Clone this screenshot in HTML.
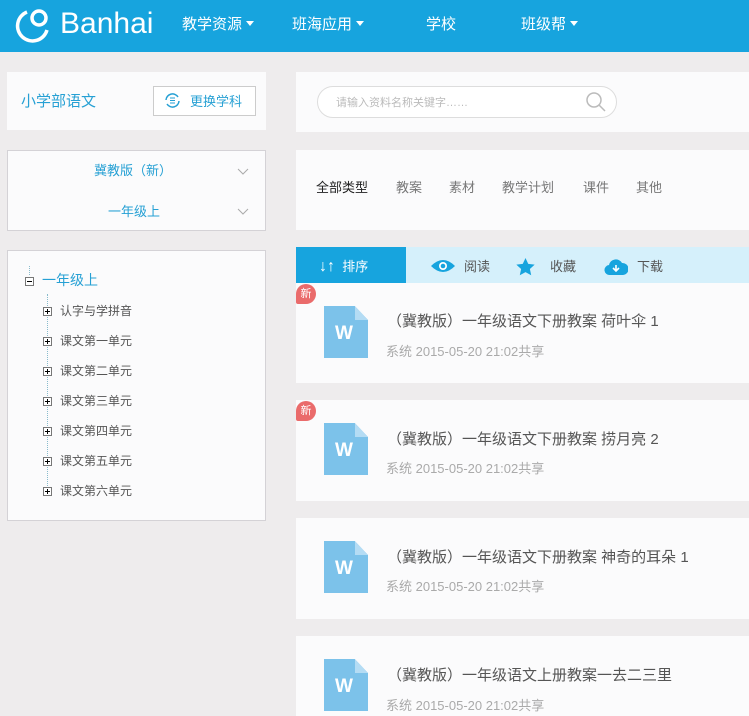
<!DOCTYPE html>
<html><head><meta charset="utf-8"><style>
*{margin:0;padding:0;box-sizing:border-box}
body{width:749px;height:716px;overflow:hidden;background:#eeeced;font-family:"Liberation Sans","Noto Sans CJK SC",sans-serif;position:relative}
.abs{position:absolute}
.hdr{left:0;top:0;width:749px;height:52px;background:#17a4de}
.nav{color:#fff;font-size:15px;top:13px}
.nav i{display:inline-block;border-left:4px solid transparent;border-right:4px solid transparent;border-top:5px solid #fff;margin-left:4px;vertical-align:3px}
.panel{background:#fbfbfc}
.bd{border:1px solid #d4d2d6}
.blue{color:#26a0d4}
.tree{font-size:12px;color:#555}
.pl{display:inline-block;width:9px;height:9px;border:1px solid #777;position:relative;vertical-align:-1px;margin-right:8px;background:#fff}
.pl:before{content:"";position:absolute;left:1px;top:3px;width:5px;height:1px;background:#000}
.pl.p:after{content:"";position:absolute;left:3px;top:1px;width:1px;height:5px;background:#000}
.card{left:296px;width:453px;background:#fbfbfc}
.doc{width:44px;height:52px;background:#7cc2ea;clip-path:polygon(0 0,70% 0,100% 27%,100% 100%,0 100%)}
.doc:after{content:"";position:absolute;right:0;top:0;width:13px;height:14px;background:#b4dcf4;clip-path:polygon(0 0,100% 100%,0 100%)}
.doc span{position:absolute;left:11px;top:17px;color:#fff;font-weight:bold;font-size:19px}
.t{font-size:15px;color:#555}
.s{font-size:13px;color:#aaa}
.new{width:20px;height:20px;border-radius:10px 10px 10px 2px;background:#ea6b6b;color:#fff;font-size:11px;text-align:center;line-height:20px}
</style></head><body>
<div class="abs hdr"></div>
<svg class="abs" style="left:14px;top:6px" width="38" height="38" viewBox="0 0 38 38"><path d="M13 6 A15 15 0 1 0 33 24" fill="none" stroke="#fff" stroke-width="3.5"/><circle cx="25" cy="12" r="7" fill="none" stroke="#fff" stroke-width="3.5"/></svg>
<div class="abs" style="left:60px;top:7px;color:#fff;font-size:30px;font-weight:300">Banhai</div>
<div class="abs nav" style="left:182px">教学资源<i></i></div>
<div class="abs nav" style="left:292px">班海应用<i></i></div>
<div class="abs nav" style="left:426px">学校</div>
<div class="abs nav" style="left:521px">班级帮<i></i></div>

<div class="abs panel" style="left:7px;top:72px;width:259px;height:58px"></div>
<div class="abs blue" style="left:21px;top:90px;font-size:15px">小学部语文</div>
<div class="abs bd" style="left:153px;top:86px;width:103px;height:30px;background:#fff;border-color:#ccc"></div>
<svg class="abs" style="left:163px;top:91px" width="19" height="19" viewBox="0 0 19 19"><path d="M3 9 A6.5 6.5 0 0 1 15 6 M16 10 A6.5 6.5 0 0 1 4 13" fill="none" stroke="#26a0d4" stroke-width="1.5"/><path d="M7 7h5M7 9.5h5M7 12h5" stroke="#26a0d4"/></svg>
<div class="abs blue" style="left:190px;top:91px;font-size:13px">更换学科</div>

<div class="abs panel bd" style="left:7px;top:150px;width:259px;height:81px"></div>
<div class="abs blue" style="left:94px;top:160px;font-size:13px">冀教版（新）</div>
<div class="abs blue" style="left:108px;top:201px;font-size:13px">一年级上</div>
<svg class="abs" style="left:237px;top:168px" width="12" height="50"><path d="M1 1l5 5 5-5M1 41l5 5 5-5" fill="none" stroke="#aaa"/></svg>

<div class="abs panel bd" style="left:7px;top:250px;width:259px;height:271px"></div>
<div class="abs" style="left:29px;top:266px;height:9px;border-left:1px dotted #8bc"></div>
<div class="abs" style="left:47px;top:294px;height:198px;border-left:1px dotted #8bc"></div>
<div class="abs" style="left:25px;top:270px;font-size:14px" ><span class="pl"></span><span class="blue">一年级上</span></div>
<div class="abs tree" style="left:43px;top:296px;line-height:30px">
<div><span class="pl p"></span>认字与学拼音</div><div><span class="pl p"></span>课文第一单元</div><div><span class="pl p"></span>课文第二单元</div><div><span class="pl p"></span>课文第三单元</div><div><span class="pl p"></span>课文第四单元</div><div><span class="pl p"></span>课文第五单元</div><div><span class="pl p"></span>课文第六单元</div></div>

<div class="abs panel" style="left:296px;top:72px;width:453px;height:60px"></div>
<div class="abs" style="left:317px;top:86px;width:300px;height:32px;border:1px solid #ddd;border-radius:16px;background:#fff"></div>
<div class="abs" style="left:336px;top:94px;font-size:11px;color:#bbb">请输入资料名称关键字……</div>
<svg class="abs" style="left:585px;top:91px" width="22" height="22"><circle cx="9" cy="9" r="7" fill="none" stroke="#bbb" stroke-width="1.5"/><path d="M14 14l6 6" stroke="#bbb" stroke-width="1.5"/></svg>

<div class="abs panel" style="left:296px;top:150px;width:453px;height:80px"></div>
<div class="abs" style="left:316px;top:177px;font-size:13px;color:#222">全部类型</div>
<div class="abs" style="left:396px;top:177px;font-size:13px;color:#777">教案</div>
<div class="abs" style="left:449px;top:177px;font-size:13px;color:#777">素材</div>
<div class="abs" style="left:502px;top:177px;font-size:13px;color:#777">教学计划</div>
<div class="abs" style="left:583px;top:177px;font-size:13px;color:#777">课件</div>
<div class="abs" style="left:636px;top:177px;font-size:13px;color:#777">其他</div>

<div class="abs" style="left:296px;top:247px;width:453px;height:36px;background:#d5f0fb"></div>
<div class="abs" style="left:296px;top:247px;width:110px;height:36px;background:#17a4de"></div>
<div class="abs" style="left:319px;top:256px;color:#fff;font-size:13px"><span style="font-size:16px">↓↑</span>&nbsp; 排序</div>
<svg class="abs" style="left:430px;top:258px" width="26" height="16"><path d="M1 8Q13 -4 25 8Q13 20 1 8Z" fill="#17a4de"/><circle cx="13" cy="8" r="4" fill="#fff"/><circle cx="13" cy="8" r="2.3" fill="#17a4de"/></svg>
<div class="abs" style="left:464px;top:256px;font-size:13px;color:#555">阅读</div>
<svg class="abs" style="left:516px;top:258px" width="19" height="18" viewBox="0 0 24 23"><path d="M12 0l3.5 7.5 8.2.9-6.1 5.6 1.7 8.1L12 18l-7.3 4.1 1.7-8.1L.3 8.4l8.2-.9z" fill="#17a4de"/></svg>
<div class="abs" style="left:550px;top:256px;font-size:13px;color:#555">收藏</div>
<svg class="abs" style="left:604px;top:258px" width="24" height="18"><path d="M6 17A5 5 0 0 1 5 7A7 7 0 0 1 18 5A6 6 0 0 1 19 17Z" fill="#17a4de"/><path d="M12 7v6M9 10l3 3 3-3" stroke="#fff" stroke-width="1.6" fill="none"/></svg>
<div class="abs" style="left:637px;top:256px;font-size:13px;color:#555">下载</div>

<div class="abs card" style="top:283px;height:100px"></div>
<div class="abs card" style="top:400px;height:101px"></div>
<div class="abs card" style="top:518px;height:101px"></div>
<div class="abs card" style="top:636px;height:80px"></div>
<div class="abs new" style="left:296px;top:284px">新</div>
<div class="abs new" style="left:296px;top:401px">新</div>

<div class="abs doc" style="left:324px;top:306px"><span>W</span></div>
<div class="abs doc" style="left:324px;top:423px"><span>W</span></div>
<div class="abs doc" style="left:324px;top:541px"><span>W</span></div>
<div class="abs doc" style="left:324px;top:659px"><span>W</span></div>
<div class="abs t" style="left:387px;top:310px">（冀教版）一年级语文下册教案 荷叶伞 1</div>
<div class="abs s" style="left:386px;top:341px">系统 2015-05-20 21:02共享</div>
<div class="abs t" style="left:387px;top:428px">（冀教版）一年级语文下册教案 捞月亮 2</div>
<div class="abs s" style="left:386px;top:458px">系统 2015-05-20 21:02共享</div>
<div class="abs t" style="left:387px;top:546px">（冀教版）一年级语文下册教案 神奇的耳朵 1</div>
<div class="abs s" style="left:386px;top:576px">系统 2015-05-20 21:02共享</div>
<div class="abs t" style="left:387px;top:664px">（冀教版）一年级语文上册教案一去二三里</div>
<div class="abs s" style="left:386px;top:695px">系统 2015-05-20 21:02共享</div>
</body></html>
